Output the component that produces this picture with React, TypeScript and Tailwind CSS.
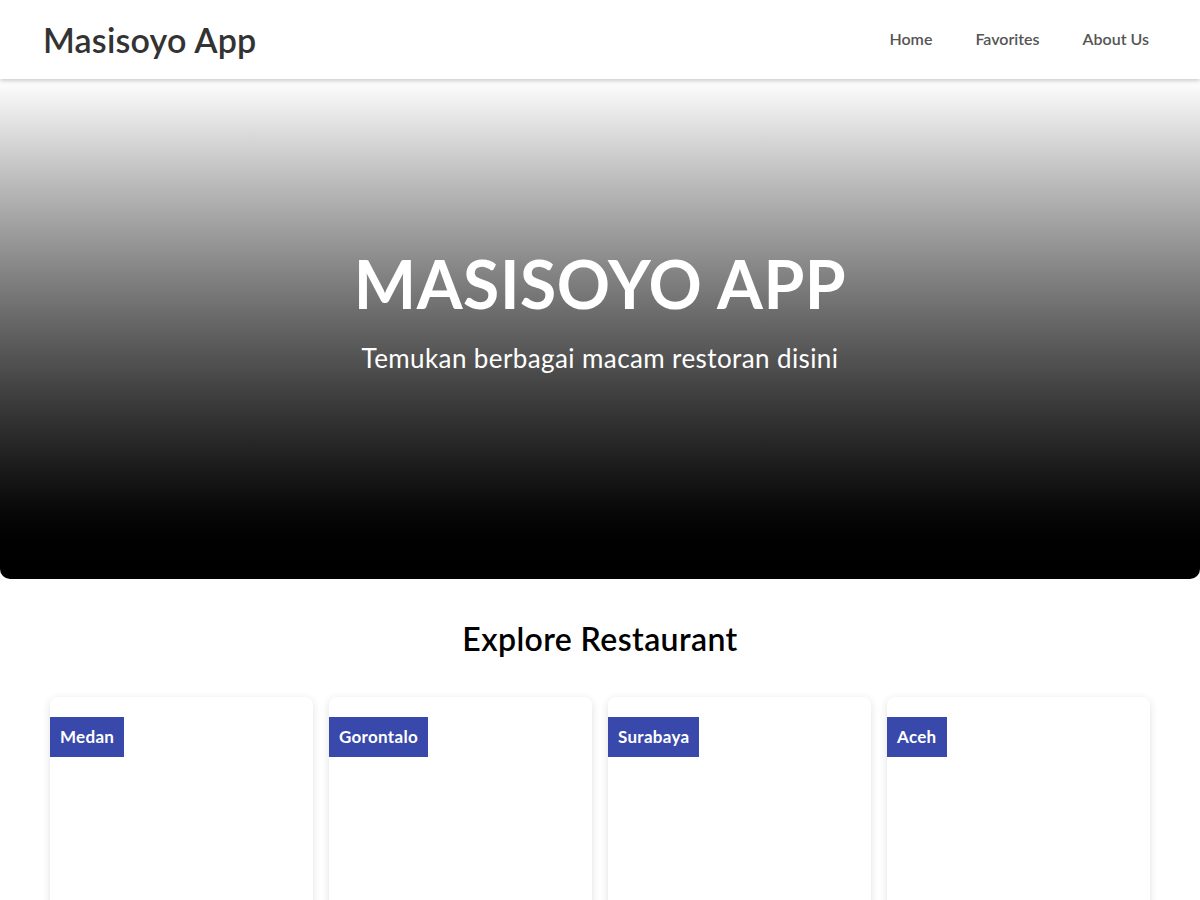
import React from "react";

const cities = ["Medan", "Gorontalo", "Surabaya", "Aceh"];

export default function App() {
  return (
    <div className="min-h-screen bg-white" style={{ fontFamily: "Lato, 'Noto Sans', sans-serif" }}>
      <header className="relative z-10 flex h-[79px] items-center justify-between bg-white pl-[43px] pr-[51px] shadow-[0_2px_4px_rgba(0,0,0,0.2)]">
        <div className="text-[34px] font-semibold tracking-[0.2px] text-[#333]">Masisoyo App</div>
        <nav className="flex items-center gap-[43px] pb-[2px] text-[16px] font-semibold text-[#555]">
          <a>Home</a>
          <a>Favorites</a>
          <a>About Us</a>
        </nav>
      </header>
      <section className="flex h-[500px] flex-col items-center justify-center rounded-b-[10px] bg-gradient-to-b from-white to-black pb-[44px] text-white">
        <h1 className="text-[66px] font-bold leading-[86px] tracking-[0.6px]">MASISOYO APP</h1>
        <p className="mt-[16px] text-[26px] leading-[31px] tracking-[0.4px]">Temukan berbagai macam restoran disini</p>
      </section>
      <main className="mx-auto w-[1100px]">
        <h2 className="mt-[40px] text-center text-[32px] font-semibold leading-[40px] tracking-[0.4px] text-black">Explore Restaurant</h2>
        <div className="mt-[38px] grid grid-cols-4 gap-[16px]">
          {cities.map((c) => (
            <div key={c} className="h-[320px] rounded-[8px] bg-white pt-[20px] shadow-[0_2px_8px_rgba(0,0,0,0.12)]">
              <span className="inline-block h-[40px] bg-[#3949ab] px-[10px] text-[17px] font-bold leading-[40px] tracking-[0.3px] text-white">{c}</span>
            </div>
          ))}
        </div>
      </main>
    </div>
  );
}
